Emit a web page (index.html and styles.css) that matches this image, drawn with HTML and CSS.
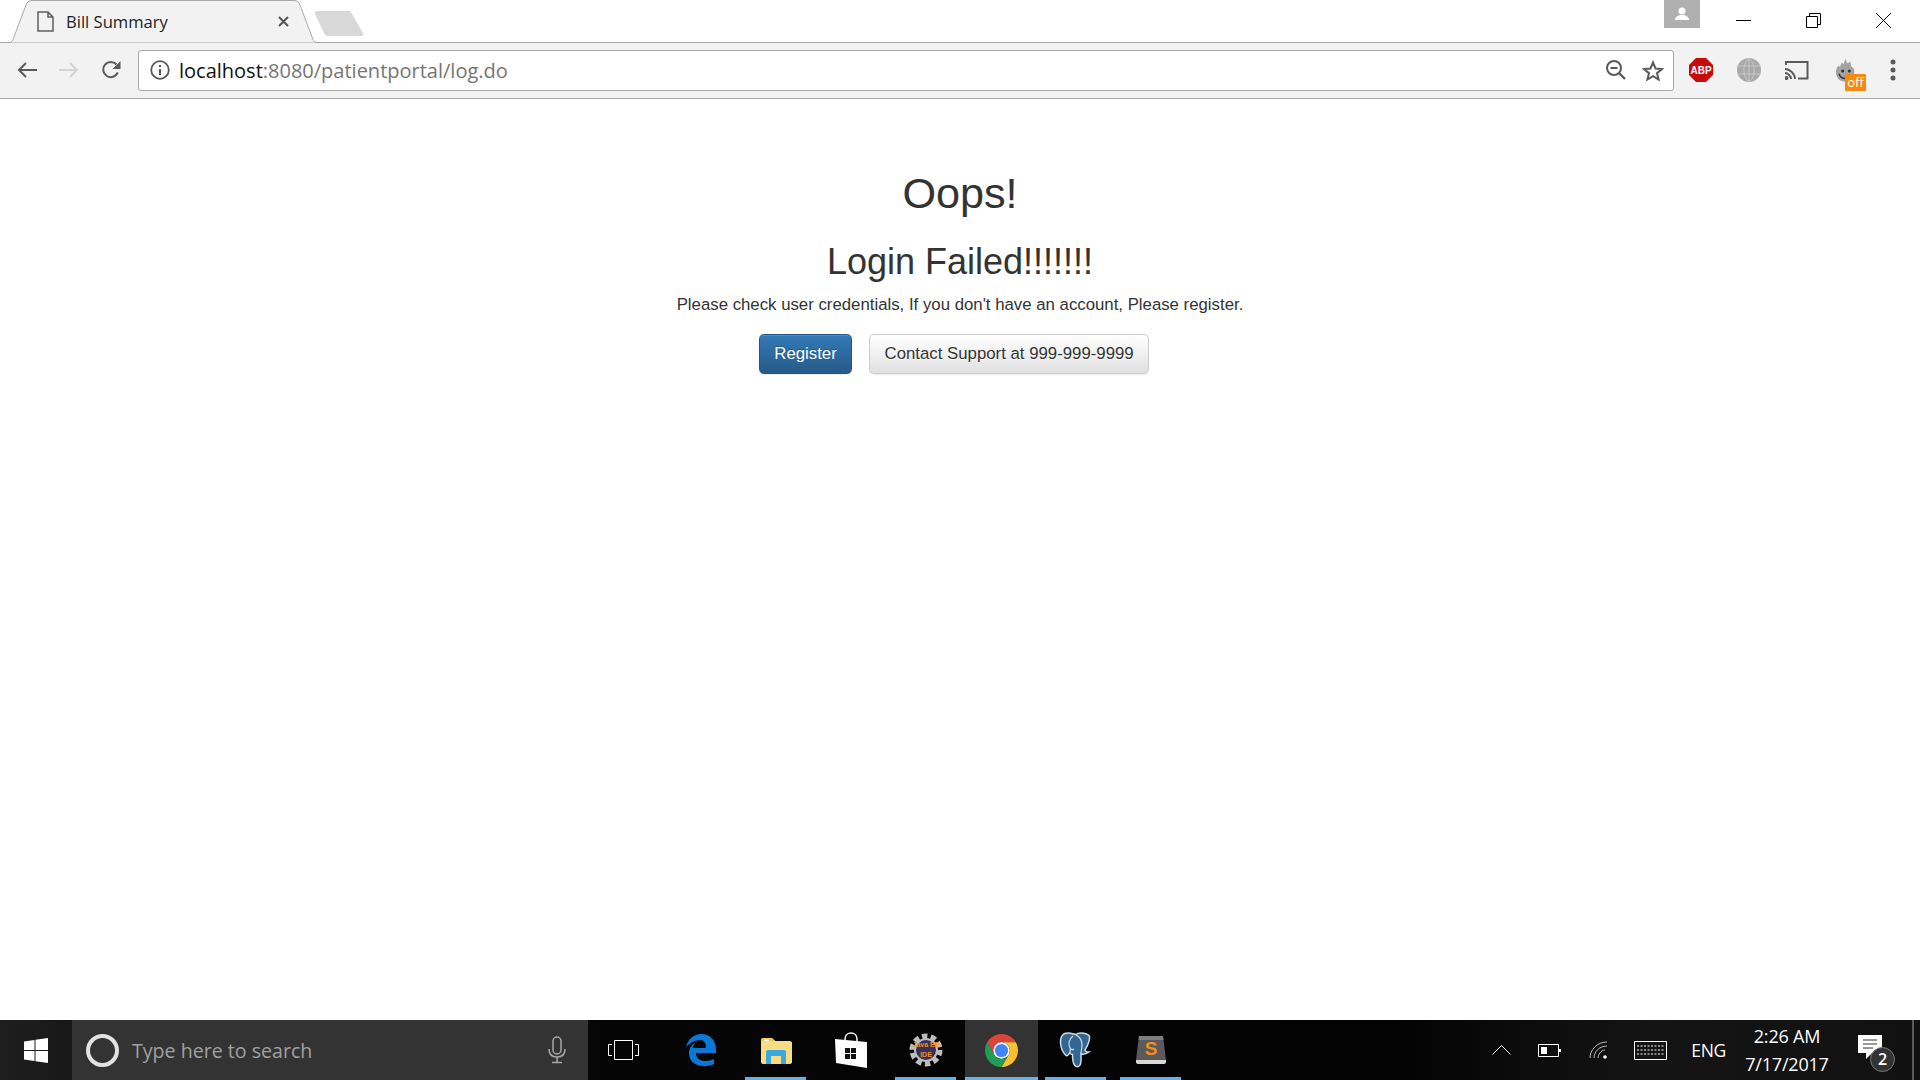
FILE: index.html
```html
<!DOCTYPE html>
<html lang="en">
  <head>
    <meta charset="UTF-8" />
    <title>Bill Summary</title>
    <link rel="stylesheet" href="styles.css">
  </head>
  <body>
    <div class="tabstrip">
      <div class="tab">
        <svg class="tab-shape" width="312" height="43" viewBox="0 0 312 43">
          <path d="M0 42.500h1c2 0 3-1 4-3L18 5c1-3 3-4.500 6-4.500h262c3 0 5 1.500 6 4.500l13 34.500c1 2 2 3 4 3h2" fill="#f2f2f2" stroke="#a9a9a9" />
        </svg>
        <svg class="tab-doc" width="17" height="21" viewBox="0 0 17 21">
          <path d="M1 1h10l5 5v14H1zM11 1v5h5" fill="none" stroke="#5f5f5f" stroke-width="1.500" />
        </svg>
        <span class="tab-title">Bill Summary</span>
        <svg class="tab-close" width="11" height="11" viewBox="0 0 11 11">
          <path d="M1 1l9 9M10 1l-9 9" stroke="#555" stroke-width="2" />
        </svg>
      </div>
      <svg class="newtab" width="50" height="25" viewBox="0 0 50 25">
        <path d="M3 0h31c2 0 3 1 4 3l11 19c.5 2-.5 3-2 3H14c-2 0-3-1-4-3L1 3C.5 1 1 0 3 0z" fill="#d8d8d8" />
      </svg>
      <div class="avatar">
        <svg width="16" height="14" viewBox="0 0 16 14">
          <circle cx="8" cy="4" r="3.500" fill="#fff" />
          <path d="M1 13c0-3 3-5 7-5s7 2 7 5z" fill="#fff" />
        </svg>
      </div>
      <div class="winbtn">
        <svg width="15" height="15" viewBox="0 0 15 15"><path d="M0 7.500h15" stroke="#000" /></svg>
      </div>
      <div class="winbtn">
        <svg width="15" height="15" viewBox="0 0 15 15">
          <path d="M.5 3.500h11v11H.5zM3.500 3.500v-3h11v11h-3" fill="none" stroke="#000" />
        </svg>
      </div>
      <div class="winbtn">
        <svg width="15" height="15" viewBox="0 0 15 15"><path d="M0 0l15 15M15 0L0 15" stroke="#000" /></svg>
      </div>
    </div>

    <div class="toolbar">
      <div class="navbtn">
        <svg width="20" height="16" viewBox="0 0 20 16">
          <path d="M20 8H2M9 1L2 8l7 7" fill="none" stroke="#5a5a5a" stroke-width="2" />
        </svg>
      </div>
      <div class="navbtn">
        <svg width="20" height="16" viewBox="0 0 20 16">
          <path d="M0 8h18M11 1l7 7-7 7" fill="none" stroke="#d4d4d4" stroke-width="2" />
        </svg>
      </div>
      <div class="navbtn">
        <svg width="20" height="20" viewBox="0 0 20 20">
          <path d="M16.800 12.500A7.600 7.600 0 1 1 15.500 4.500" fill="none" stroke="#5a5a5a" stroke-width="2" />
          <path d="M19.500 1v8h-8z" fill="#5a5a5a" />
        </svg>
      </div>
      <div class="omnibox">
        <svg class="info" width="20" height="20" viewBox="0 0 20 20">
          <circle cx="10" cy="10" r="8.800" fill="none" stroke="#5a5a5a" stroke-width="1.800" />
          <path d="M9 9h2v6H9zM9 5h2v2H9z" fill="#5a5a5a" />
        </svg>
        <span class="url"><span class="host">localhost</span>:8080/patientportal/log.do</span>
        <div class="omni-btn">
          <svg width="20" height="20" viewBox="0 0 20 20">
            <circle cx="8" cy="8" r="7" fill="none" stroke="#5a5a5a" stroke-width="2" />
            <path d="M13 13l6 6" stroke="#5a5a5a" stroke-width="2.400" />
            <path d="M4.500 8h7" stroke="#5a5a5a" stroke-width="2" />
          </svg>
        </div>
        <div class="omni-btn omni-star">
          <svg width="22" height="21" viewBox="0 0 22 21">
            <path d="M11 2.500l2.500 6 6.500.5-5 4.200 1.600 6.300-5.600-3.400-5.600 3.400L7 13.200 2 9l6.500-.5z" fill="none" stroke="#5a5a5a" stroke-width="2" />
          </svg>
        </div>
      </div>
      <div class="extensions">
        <div class="ext">
          <svg width="24" height="24" viewBox="0 0 24 24">
            <path d="M7 0h10l7 7v10l-7 7H7l-7-7V7z" fill="#c80a0a" />
            <text class="abp" x="12" y="16" text-anchor="middle">ABP</text>
          </svg>
        </div>
        <div class="ext">
          <svg width="24" height="24" viewBox="0 0 24 24">
            <circle cx="12" cy="12" r="12" fill="#a9a9a9" />
            <path d="M0 8h24M0 16h24M12 0v24M12 0C5 6 5 18 12 24M12 0c7 6 7 18 0 24" fill="none" stroke="#c8c8c8" />
          </svg>
        </div>
        <div class="ext">
          <svg width="24" height="20" viewBox="0 0 24 20">
            <path d="M1 5V2h21.500v16.500H13" fill="none" stroke="#5a5a5a" stroke-width="2" />
            <path d="M0 9c5 0 10 5 10 10M0 13c3 0 6 3 6 6" fill="none" stroke="#5a5a5a" stroke-width="2" />
            <circle cx="1.500" cy="18" r="2" fill="#5a5a5a" />
          </svg>
        </div>
        <div class="ext ext-fire">
          <svg width="19" height="25" viewBox="0 0 20 25">
            <path d="M10 0l2 5 3-2 1 5 3 3c1 6-1 12-8 13C4 25 0 20 0 14c0-3 1-5 3-7l1 2 2-5 2 2z" fill="#a3a3a3" />
            <circle cx="7" cy="13" r="1.600" fill="#333" />
            <circle cx="14" cy="13" r="1.600" fill="#333" />
            <path d="M3 16c1 3 4 5 7 5" fill="none" stroke="#333" stroke-width="1.500" />
          </svg>
          <span class="off-badge">off</span>
        </div>
        <div class="ext">
          <svg width="6" height="22" viewBox="0 0 6 22">
            <circle cx="3" cy="3" r="2.500" fill="#5a5a5a" />
            <circle cx="3" cy="11" r="2.500" fill="#5a5a5a" />
            <circle cx="3" cy="19" r="2.500" fill="#5a5a5a" />
          </svg>
        </div>
      </div>
    </div>

    <main class="page">
      <h1>Oops!</h1>
      <h2>Login Failed!!!!!!!</h2>
      <p>Please check user credentials, If you don't have an account, Please register.</p>
      <div class="actions">
        <a class="btn btn-primary">Register</a>
        <a class="btn btn-default">Contact Support at 999-999-9999</a>
      </div>
    </main>

    <div class="taskbar">
      <div class="start">
        <svg width="24" height="25" viewBox="0 0 24 25">
          <path d="M0 3.500L10.500 2v10H0zM11.500 1.800L24 0v12H11.500zM0 13h10.500v10L0 21.500zM11.500 13H24v12l-12.500-1.800z" fill="#fff" />
        </svg>
      </div>
      <div class="search">
        <span class="cortana"></span>
        <span class="search-text">Type here to search</span>
        <svg width="18" height="28" viewBox="0 0 18 28">
          <rect x="5" y="1" width="8" height="17" rx="4" fill="none" stroke="#a8a8a8" stroke-width="1.500" />
          <path d="M1 13c0 5 3 8 8 8s8-3 8-8M9 21v5M4 26.500h10" fill="none" stroke="#a8a8a8" stroke-width="1.500" />
        </svg>
      </div>
      <div class="slot slot-view">
        <svg width="31" height="20" viewBox="0 0 31 20">
          <path d="M6.500.5h18v19h-18zM4 4.500H.5v11H4M27 4.500h3.500v11H27" fill="none" stroke="#fff" />
        </svg>
      </div>
      <div class="slot">
        <svg width="30" height="32" viewBox="0 0 30 32">
          <path d="M0 13C2 5 8 0 15 0c9 0 15 6 15 16v3H10c0 5 4 8 9 8 4 0 7-1 9-2v5c-3 1.500-6 2-10 2C9 32 3 27 3 19c0-5 3-9 8-11-3 2-4 4-4.500 6H20c0-5-2-8-6-8-5 0-10 3-14 7z" fill="#0a78d7" />
        </svg>
      </div>
      <div class="slot running">
        <svg width="32" height="27" viewBox="0 0 32 27">
          <path d="M1 3c0-1 1-2 2-2h9l3 3h15c1 0 2 1 2 2v19c0 1-1 2-2 2H3c-1 0-2-1-2-2z" fill="#f7dc83" />
          <path d="M1 3c0-1 1-2 2-2h9l3 3H1z" fill="#eec350" />
          <path d="M6 27V15c0-1 1-2 2-2h16c1 0 2 1 2 2v12h-5v-8H11v8z" fill="#3aa9e0" />
          <path d="M4 2.500h5v1.500H4z" fill="#fff" />
        </svg>
      </div>
      <div class="slot">
        <svg width="32" height="36" viewBox="0 0 32 36">
          <path d="M10 9V7c0-8 12-8 12 0v2" fill="none" stroke="#fff" stroke-width="1.500" />
          <path d="M0 7l32 3v26L1 31z" fill="#fff" />
          <path d="M10 16h5v5h-5zM16 16h5v5h-5zM10 22h5v5h-5zM16 22h5v5h-5z" fill="#111" />
        </svg>
      </div>
      <div class="slot running">
        <svg width="34" height="34" viewBox="0 0 34 34">
          <circle cx="17" cy="17" r="13" fill="none" stroke="#bdbdbd" stroke-width="7" stroke-dasharray="5 3.170" />
          <circle cx="17" cy="17" r="11" fill="#38305a" stroke="#bdbdbd" stroke-width="2" />
          <text class="java-text" x="17" y="14" text-anchor="middle">Java EE</text>
          <text class="java-text" x="17" y="24" text-anchor="middle">IDE</text>
        </svg>
      </div>
      <div class="slot slot-active">
        <svg width="33" height="33" viewBox="4 4 40 40">
          <path d="M6.700 14A20 20 0 0 1 41.300 14H24A10 10 0 0 0 15.300 29Z" fill="#db4437" />
          <path d="M41.300 14A20 20 0 0 1 24 44L32.700 29A10 10 0 0 0 24 14Z" fill="#fbc02d" />
          <path d="M24 44A20 20 0 0 1 6.700 14L15.300 29A10 10 0 0 0 32.700 29Z" fill="#229d55" />
          <circle cx="24" cy="24" r="10" fill="#fff" />
          <circle cx="24" cy="24" r="8" fill="#4285f4" />
        </svg>
      </div>
      <div class="slot running">
        <svg width="34" height="37" viewBox="0 0 34 37">
          <path d="M9 1C3 1 1 6 1.500 11c.5 5 3 10 5 12 1.500 1.500 3 0 4-2 1 1 2 1.500 3 1.500 0 4 0 8 2 10.500 2 3 5 2 6-1 1-3 .5-7 .5-10 3 .5 6-.5 8-2-2 0-4-.5-4-2 3-5 5-10 4.500-14C29.500 3 26 1 22 1c-2 0-4 .5-5 1.500C14.500 2 12 1 9 1z" fill="#336791" stroke="#cfdbe6" stroke-width="1.500" />
          <path d="M14 4c-4 3-5 8-3 12 1 2 3 2 4 1M17 3c4 2 6 6 6 10 0 3-1 6-1 9M11 21c0-2 0-4 1-5" fill="none" stroke="#cfdbe6" stroke-width="1.200" />
        </svg>
      </div>
      <div class="slot running">
        <svg width="32" height="30" viewBox="0 0 32 30">
          <path d="M4 1h24l3 24H1z" fill="#5a5a5a" />
          <path d="M1 25h30v2c0 1-1 2-2 2H3c-1 0-2-1-2-2z" fill="#d8d8d8" />
          <path d="M4 1h24l.500 4H3.500z" fill="#7d7d7d" />
          <text class="sublime-s" x="16" y="20" text-anchor="middle">S</text>
        </svg>
      </div>

      <div class="tray">
        <svg class="tray-caret" width="19" height="10" viewBox="0 0 19 10">
          <path d="M.5 9.500l9-9 9 9" fill="none" stroke="#fff" />
        </svg>
        <svg class="tray-battery" width="23" height="13" viewBox="0 0 23 13">
          <path d="M.5.500h20v12H.5z" fill="none" stroke="#fff" />
          <path d="M3 3h6v7H3zM21 5h2v3h-2z" fill="#fff" />
        </svg>
        <svg class="tray-wifi" width="18" height="18" viewBox="0 0 18 18">
          <path d="M1 17C1 9 8 1 18 1M5 17C5 11 10 5 18 5M9 17c0-3 3-8 7-8" fill="none" stroke="#bbb" />
          <circle cx="16" cy="16" r="1.800" fill="#fff" />
        </svg>
        <svg class="tray-keys" width="33" height="19" viewBox="0 0 33 19">
          <path d="M.5.500h32v18H.5z" fill="none" stroke="#fff" />
          <path d="M3 5h27M3 9h27M3 13h27" stroke="#fff" stroke-dasharray="2 1.500" />
        </svg>
        <span class="tray-lang">ENG</span>
        <div class="clock">
          <span>2:26 AM</span>
          <span>7/17/2017</span>
        </div>
        <div class="notify">
          <svg width="24" height="24" viewBox="0 0 24 24">
            <path d="M0 0h24v18H14l-6 6v-6H0z" fill="#fff" />
            <path d="M5 5h14M5 9h14M5 13h10" stroke="#333" />
          </svg>
          <span class="notify-badge">2</span>
        </div>
        <span class="show-desktop"></span>
      </div>
    </div>
  </body>
</html>
```

FILE: styles.css
```css
html,
body {
  height: 100%;
}
body {
  margin: 0;
  display: flex;
  flex-direction: column;
  overflow: hidden;
  background: #fff;
  font-family: "Liberation Sans", Arial, sans-serif;
}

/* browser frame */
.tabstrip {
  display: flex;
  flex: none;
  box-sizing: border-box;
  height: 43px;
  border-bottom: 1px solid #a9a9a9;
}
.tab {
  position: relative;
  display: flex;
  align-items: center;
  box-sizing: border-box;
  width: 312px;
  height: 43px;
  margin-left: 8px;
  padding: 0 31px 1px 29px;
}
.tab-shape {
  position: absolute;
  top: 0;
  left: 0;
}
.tab-doc,
.tab-title,
.tab-close {
  position: relative;
}
.tab-title {
  flex: 1;
  margin-left: 12px;
  font: 16.600px "Open Sans", sans-serif;
  color: #222;
}
.newtab {
  margin: 11px 0 0 -6px;
}
.avatar {
  display: flex;
  align-items: center;
  justify-content: center;
  width: 36px;
  height: 28px;
  margin-left: auto;
  margin-right: 8px;
  background: #b0b0b0;
}
.winbtn {
  display: flex;
  align-items: center;
  justify-content: center;
  width: 70px;
  height: 40px;
}
.winbtn:last-child {
  margin-right: 2px;
}
.toolbar {
  display: flex;
  flex: none;
  align-items: center;
  box-sizing: border-box;
  height: 56px;
  padding: 0 3px 1px 6px;
  background: #f2f2f2;
  border-bottom: 1px solid #a9a9a9;
}
.navbtn {
  display: flex;
  align-items: center;
  justify-content: center;
  width: 42px;
}
.omnibox {
  display: flex;
  flex: 1;
  align-items: center;
  box-sizing: border-box;
  height: 41px;
  margin-left: 6px;
  padding-left: 11px;
  background: #fff;
  border: 1px solid #a9a9a9;
  border-radius: 3px;
}
.url {
  flex: 1;
  margin-left: 9px;
  font: 20px "Open Sans", sans-serif;
  color: #757575;
}
.host {
  color: #111;
}
.omni-btn {
  display: flex;
  align-items: center;
  justify-content: center;
  width: 38px;
}
.omni-star {
  padding-right: 2px;
  box-sizing: border-box;
}
.extensions {
  display: flex;
  margin-left: 3px;
}
.ext {
  position: relative;
  display: flex;
  align-items: center;
  justify-content: center;
  width: 48px;
}
.abp {
  font: bold 10px "Liberation Sans", sans-serif;
  fill: #fff;
}
.off-badge {
  position: absolute;
  top: 16px;
  left: 24px;
  width: 21px;
  height: 17px;
  background: #f58a0b;
  border-radius: 1px;
  font: 13px/17px "Open Sans", sans-serif;
  text-align: center;
  color: #fff;
}

/* page content */
.page {
  flex: 1;
  padding-top: 47px;
  text-align: center;
  color: #333;
}
h1,
h2 {
  margin: 24px 0 12px;
  font-weight: 500;
  line-height: 1.100;
}
h1 {
  font-size: 43.200px;
}
h2 {
  font-size: 36px;
}
p {
  margin: 0 0 17px;
  font-size: 16.800px;
  line-height: 24px;
}
.actions {
  display: flex;
  justify-content: center;
  gap: 17px;
  padding-right: 12px;
}
.btn {
  box-sizing: border-box;
  height: 40px;
  padding: 7px 14.400px;
  border: 1px solid transparent;
  border-radius: 4.800px;
  font-size: 16.800px;
  line-height: 24px;
  box-shadow: inset 0 1px 0 rgba(255, 255, 255, 0.15), 0 1px 1px rgba(0, 0, 0, 0.075);
}
.btn-primary {
  background: linear-gradient(#337ab7, #265a88);
  border-color: #245580;
  color: #fff;
  text-shadow: 0 -1px 0 rgba(0, 0, 0, 0.2);
}
.btn-default {
  background: linear-gradient(#fff, #e0e0e0);
  border-color: #ccc;
  color: #333;
  text-shadow: 0 1px 0 #fff;
}

/* windows taskbar */
.taskbar {
  display: flex;
  flex: none;
  height: 60px;
  background: linear-gradient(90deg, #1e1e1e, #181818 72px, #050505 600px, #030303 1400px, #141414 1650px, #111);
  font-family: "Open Sans", sans-serif;
  color: #fff;
}
.start {
  display: flex;
  align-items: center;
  justify-content: center;
  width: 72px;
}
.search {
  display: flex;
  align-items: center;
  box-sizing: border-box;
  width: 516px;
  padding: 0 22px 0 14px;
  background: #333;
}
.cortana {
  box-sizing: border-box;
  width: 33px;
  height: 33px;
  border: 4px solid #e2e2e2;
  border-radius: 50%;
}
.search-text {
  flex: 1;
  margin-left: 13px;
  font-size: 19.600px;
  color: #a0a0a0;
}
.slot {
  display: flex;
  align-items: center;
  justify-content: center;
  width: 75px;
}
.slot-view {
  box-sizing: border-box;
  padding-right: 5px;
}
.running {
  background: linear-gradient(#66b0ea, #66b0ea) center bottom / 61px 3px no-repeat;
}
.slot-active {
  width: 73px;
  margin-left: 2px;
  background: linear-gradient(#66b0ea, #66b0ea) center bottom / 100% 3px no-repeat, #333;
}
.java-text {
  font: bold 7px "Liberation Sans", sans-serif;
  fill: #f08c1e;
}
.sublime-s {
  font: bold 19px "Liberation Sans", sans-serif;
  fill: #f09020;
}
.tray {
  display: flex;
  flex: 1;
  align-items: center;
  justify-content: flex-end;
}
.tray-caret {
  margin-right: 27px;
}
.tray-battery {
  margin-right: 28px;
}
.tray-wifi {
  margin-right: 27px;
}
.tray-keys {
  margin-right: 24px;
}
.tray-lang {
  margin-right: 16px;
  font-size: 17.500px;
  letter-spacing: -0.300px;
}
.clock {
  display: flex;
  flex-direction: column;
  align-items: center;
  gap: 4px;
  width: 90px;
  margin-right: 26px;
  font-size: 18px;
  line-height: 24px;
  letter-spacing: -0.200px;
}
.notify {
  position: relative;
  height: 24px;
  margin-top: -6px;
  margin-right: 30px;
}
.notify-badge {
  position: absolute;
  top: 12px;
  left: 12px;
  box-sizing: border-box;
  width: 25px;
  height: 25px;
  background: #333;
  border: 1px solid #777;
  border-radius: 50%;
  font-size: 16px;
  font-weight: 600;
  line-height: 22px;
  text-align: center;
}
.show-desktop {
  align-self: stretch;
  width: 2px;
  margin-right: 6px;
  background: #5a5a5a;
}
```
